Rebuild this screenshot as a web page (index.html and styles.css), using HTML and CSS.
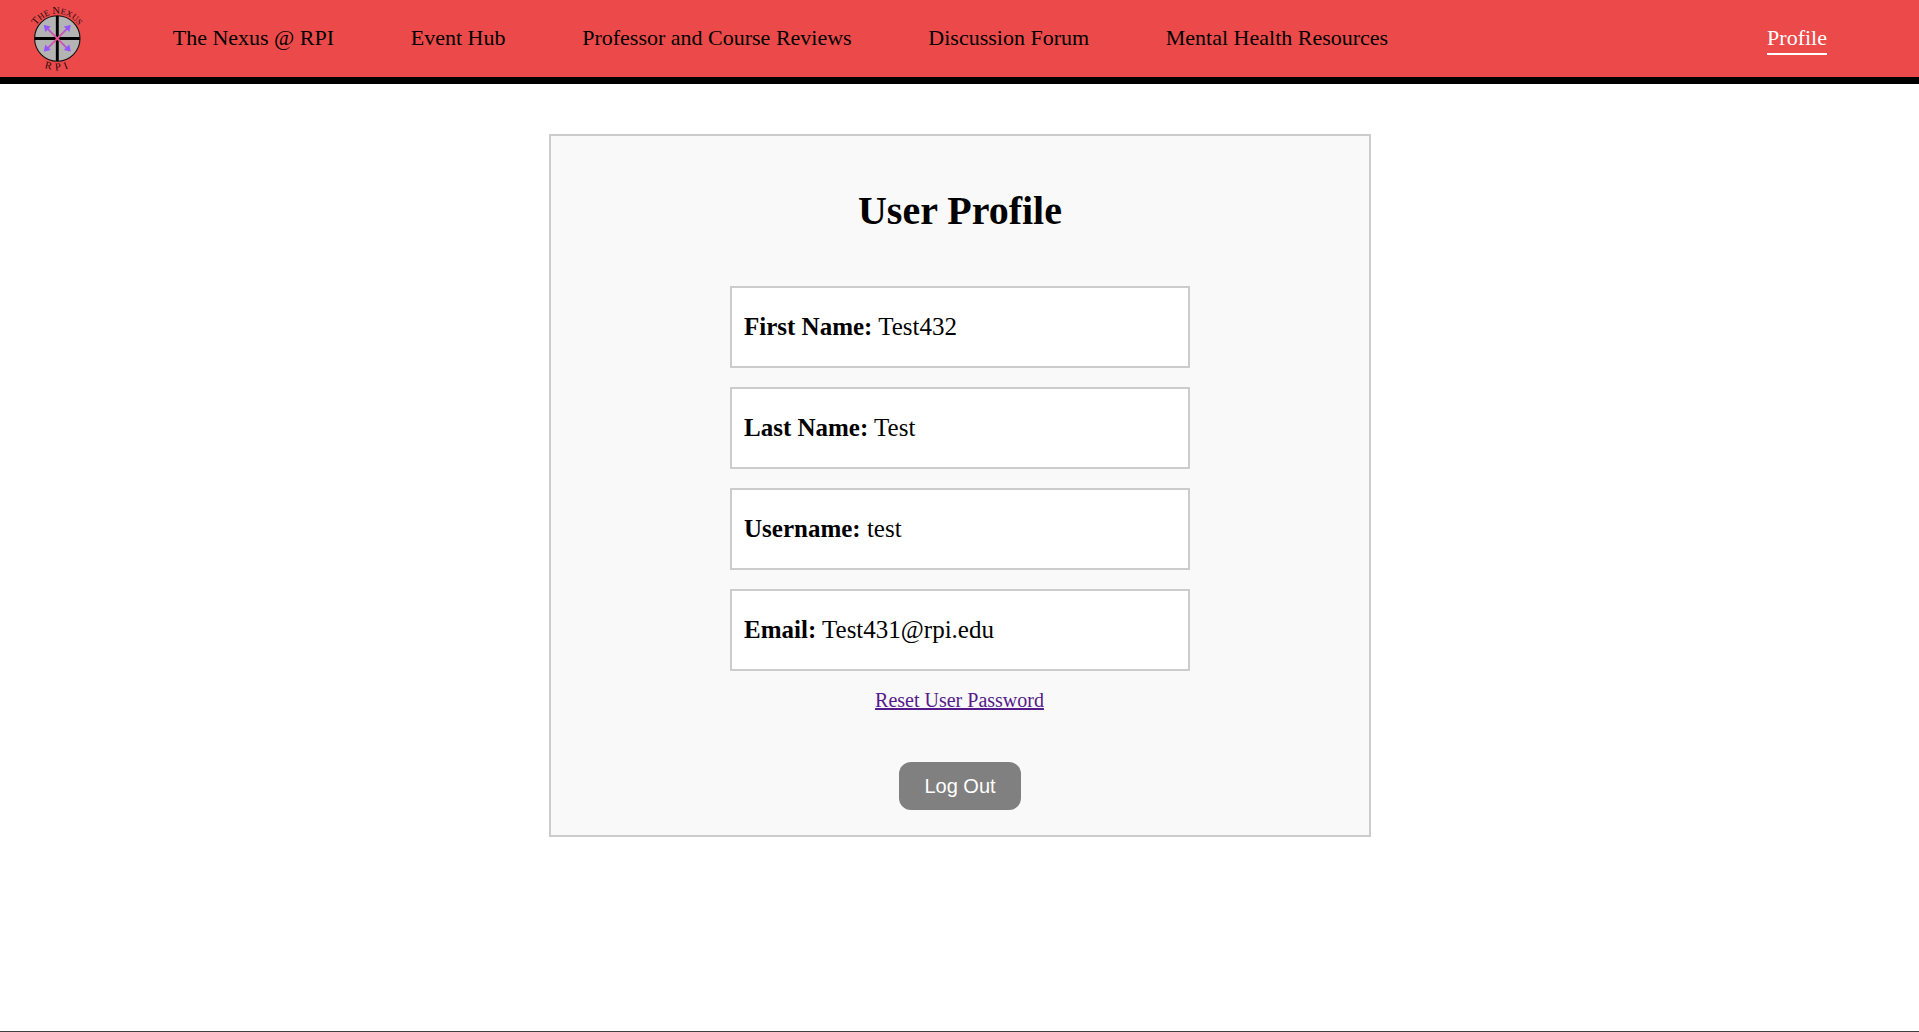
FILE: index.html
```html
<!DOCTYPE html>
<html lang="en">
<head>
<meta charset="utf-8">
<title>User Profile</title>
<link rel="stylesheet" href="styles.css">
</head>
<body>
<header class="navbar">
  <svg class="logo" viewBox="-10 0 70 77" role="img" aria-label="The Nexus RPI">
    <defs>
      <path id="arc-top" d="M3.3 44.9A24.8 24.8 0 1 1 51.3 44.9"/>
      <path id="arc-bottom" d="M2 57.7A31.7 31.7 0 0 0 52.6 57.7"/>
      <linearGradient id="ray" gradientUnits="userSpaceOnUse" x1="14" y1="0" x2="40.6" y2="0">
        <stop offset="0" stop-color="#9455ff"/>
        <stop offset=".5" stop-color="#f0508c"/>
        <stop offset="1" stop-color="#9455ff"/>
      </linearGradient>
    </defs>
    <circle cx="27.3" cy="38.5" r="22.7" fill="#b4b4b4" stroke="#111" stroke-width="1.1"/>
    <path d="M27.3 16v45M4.8 38.5h45" stroke="#000" stroke-width="2.9"/>
    <path d="M15 26.2L39.6 50.8M39.6 26.2L15 50.8" stroke="url(#ray)" stroke-width="1.8"/>
    <path d="M13.8 25l7 1.5-5.5 5.5zM40.8 25l-7 1.5 5.5 5.5zM13.8 51.5l7-1.5-5.5-5.5zM40.8 51.5l-7-1.5 5.5-5.5z" fill="#9455ff"/>
    <text class="logo-text"><textPath href="#arc-top" startOffset="50%" text-anchor="middle"><tspan class="logo-cap">T</tspan>HE<tspan class="logo-cap" dx="2.6">N</tspan>EXUS</textPath></text>
    <text class="logo-text logo-rpi"><textPath href="#arc-bottom" startOffset="52%" text-anchor="middle">RPI</textPath></text>
  </svg>
  <nav class="links">
    <a>The Nexus @ RPI</a>
    <a>Event Hub</a>
    <a>Professor and Course Reviews</a>
    <a>Discussion Forum</a>
    <a>Mental Health Resources</a>
  </nav>
  <a class="profile-link">Profile</a>
</header>
<main class="card">
  <h1>User Profile</h1>
  <div class="fields">
    <p class="field"><strong>First Name:</strong> Test432</p>
    <p class="field"><strong>Last Name:</strong> Test</p>
    <p class="field"><strong>Username:</strong> test</p>
    <p class="field"><strong>Email:</strong> Test431@rpi.edu</p>
  </div>
  <a class="reset" href="#">Reset User Password</a>
  <button class="logout" type="button">Log Out</button>
</main>
</body>
</html>
```
FILE: styles.css
```css
* {
  box-sizing: border-box;
}

body {
  margin: 0;
  min-height: 100vh;
  background: #fff;
  border-bottom: 1px solid #403e41;
  color: #000;
  font-family: "Liberation Serif", "Times New Roman", serif;
}

.navbar {
  display: flex;
  height: 84px;
  padding: 0 92px 0 20px;
  background: #ec4a4a;
  border-bottom: 7px solid #000;
  font-size: 22px;
  line-height: 25px;
}

.logo {
  width: 70px;
  height: 77px;
  flex: none;
}

.logo-text {
  font-family: "Liberation Serif", serif;
  font-size: 8.5px;
  fill: #24080c;
}

.logo-cap {
  font-size: 10.5px;
}

.logo-rpi {
  font-size: 10.5px;
  letter-spacing: 4.2px;
}

.links {
  display: flex;
  gap: 76.7px;
  margin-left: 82.7px;
  padding-top: 25px;
}

.profile-link {
  align-self: flex-start;
  margin: 25px 0 0 auto;
  padding-bottom: 3px;
  border-bottom: 2px solid #fff;
  color: #fff;
}

.card {
  display: flex;
  flex-direction: column;
  align-items: center;
  width: 822px;
  height: 703px;
  margin: 50px auto 0;
  padding-top: 52px;
  background: #f9f9f9;
  border: 2px solid #ccc;
}

h1 {
  margin: 0;
  padding-left: 1px;
  font-size: 40px;
  line-height: 46px;
}

.fields {
  display: grid;
  gap: 19px;
  width: 460px;
  margin-top: 52px;
}

.field {
  height: 82px;
  margin: 0;
  padding: 25px 12.5px;
  background: #fff;
  border: 2px solid #ccc;
  font-size: 25px;
  line-height: 28px;
}

.reset {
  margin-top: 18px;
  color: #551a8b;
  font-size: 20px;
  line-height: 22px;
}

.logout {
  width: 122px;
  height: 48px;
  margin-top: 51px;
  padding: 0 0 0 1px;
  background: #808080;
  border: 0;
  border-radius: 12px;
  color: #fff;
  font: 20px "Liberation Sans", Arial, sans-serif;
}
```
